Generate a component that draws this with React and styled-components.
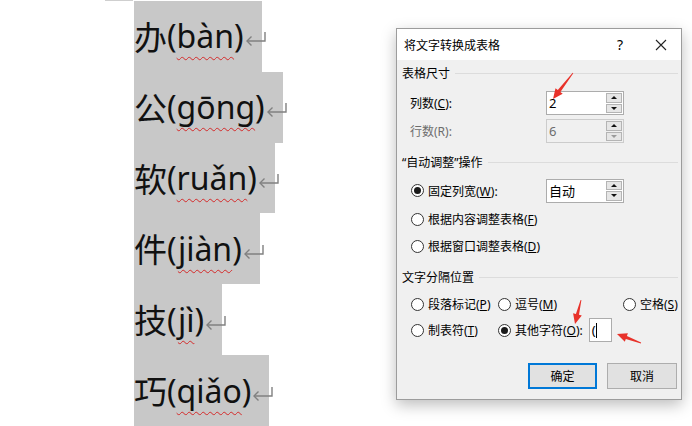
import React from "react";
import styled, { createGlobalStyle } from "styled-components";

const GlobalStyle = createGlobalStyle`
  html, body {
    margin: 0;
    padding: 0;
    background: #fff;
  }
  body {
    font-family: "Noto Sans", "Noto Sans CJK SC", sans-serif;
  }
`;

const Page = styled.div`
  position: relative;
  display: flex;
  width: 692px;
  height: 426px;
  overflow: hidden;
  background: #fff;
`;

/* ---------- word document side ---------- */

const DocPane = styled.div`
  flex: none;
  width: 396px;
  display: flex;
  flex-direction: column;
  align-items: flex-start;
`;
const TopStripe = styled.div`
  margin-left: 105px;
  width: 28px;
  height: 1px;
  background: #cfcfcf;
`;
const Para = styled.div`
  margin-left: 134px;
  height: 71.4px;
  display: flex;
  align-items: center;
  background: #c8c8c8;
  color: #111;
  line-height: 1;
`;
const Han = styled.span`
  font-family: "Noto Sans CJK SC", sans-serif;
  font-size: 33px;
`;
const Pinyin = styled.span`
  font-family: "Noto Sans", "Noto Sans CJK SC", sans-serif;
  font-size: 32px;
`;
const Wavy = styled.span`
  text-decoration-line: underline;
  text-decoration-style: wavy;
  text-decoration-color: #d42a2a;
  text-decoration-thickness: 1px;
  text-underline-offset: 8px;
`;
const Mark = styled.span`
  width: 18px;
  height: 14px;
  margin-top: 4px;
  display: inline-flex;
  svg {
    overflow: visible;
    flex: none;
  }
`;

const words = [
  { ch: "办", py: "bàn" },
  { ch: "公", py: "gōng" },
  { ch: "软", py: "ruǎn" },
  { ch: "件", py: "jiàn" },
  { ch: "技", py: "jì" },
  { ch: "巧", py: "qiǎo" },
];

function ParaMark() {
  return (
    <Mark>
      <svg width="22" height="14" viewBox="0 0 22 14">
        <path d="M21 1 V10 H3" fill="none" stroke="#808080" strokeWidth="1.4" />
        <path d="M7.5 5.5 L3 10 L7.5 14.5" fill="none" stroke="#808080" strokeWidth="1.4" />
      </svg>
    </Mark>
  );
}

/* ---------- dialog ---------- */

const DialogArea = styled.div`
  flex: none;
  padding-top: 28px;
`;
const Dialog = styled.div`
  width: 286px;
  height: 372px;
  box-sizing: border-box;
  border: 1px solid #9c9c9c;
  background: #f0f0f0;
  box-shadow: 0 5px 14px rgba(0, 0, 0, 0.26);
  display: flex;
  flex-direction: column;
  font-family: "Noto Sans", "Noto Sans CJK SC", sans-serif;
  font-size: 12px;
  color: #000;
`;
const TitleBar = styled.div`
  height: 31px;
  flex: none;
  display: flex;
  align-items: center;
  background: #fff;
  padding-left: 7px;
`;
const Title = styled.div`
  flex: 1;
`;
const TitleButton = styled.div`
  width: ${(p) => p.$w}px;
  height: 31px;
  display: flex;
  align-items: center;
  justify-content: center;
  font-size: 14px;
`;
const Body = styled.div`
  display: flex;
  flex-direction: column;
  padding: 0 3px 0 5px;
`;
const GroupHeader = styled.div`
  height: 18px;
  margin-top: ${(p) => p.$mt}px;
  display: flex;
  align-items: center;
  gap: 5px;
  &::after {
    content: "";
    flex: 1;
    height: 1px;
    background: #dcdcdc;
  }
`;
const FieldRow = styled.div`
  height: ${(p) => p.$h || 24}px;
  margin-top: ${(p) => p.$mt}px;
  padding-left: ${(p) => p.$pl || 8}px;
  display: flex;
  align-items: center;
`;
const FieldLabel = styled.div`
  width: ${(p) => p.$w || 136}px;
  color: ${(p) => (p.$disabled ? "#6d6d6d" : "#000")};
`;
const SpinBox = styled.div`
  width: 78px;
  height: 24px;
  box-sizing: border-box;
  display: flex;
  border: 1px solid ${(p) => (p.$disabled ? "#cccccc" : "#acacac")};
  background: ${(p) => (p.$disabled ? "#f0f0f0" : "#fff")};
`;
const SpinValue = styled.div`
  flex: 1;
  display: flex;
  align-items: center;
  padding-left: 2px;
  font-size: 13px;
  color: ${(p) => (p.$disabled ? "#6d6d6d" : "#000")};
`;
const SpinButtons = styled.div`
  width: 16px;
  display: flex;
  flex-direction: column;
  gap: 1px;
  padding: 1px 1px 1px 0;
`;
const SpinButton = styled.div`
  flex: 1;
  display: flex;
  align-items: center;
  justify-content: center;
  border: 1px solid #b4b4b4;
  background: #e6e6e6;
  &::before {
    content: "";
    border-left: 3px solid transparent;
    border-right: 3px solid transparent;
    ${(p) => (p.$down ? "border-top" : "border-bottom")}: 3px solid
      ${(p) => (p.$dim ? "#9a9a9a" : "#111")};
  }
`;
const RadioLine = styled.label`
  display: flex;
  align-items: center;
  gap: 4px;
  white-space: nowrap;
`;
const RadioDot = styled.span`
  width: 13px;
  height: 13px;
  box-sizing: border-box;
  border-radius: 50%;
  border: 1px solid #333;
  background: #fff;
  display: flex;
  align-items: center;
  justify-content: center;
  flex: none;
  &::after {
    content: "";
    width: 7px;
    height: 7px;
    border-radius: 50%;
    background: ${(p) => (p.$on ? "#1a1a1a" : "transparent")};
  }
`;
const SepGrid = styled.div`
  height: ${(p) => p.$h}px;
  margin-top: ${(p) => p.$mt}px;
  padding-left: 9px;
  display: grid;
  grid-template-columns: 87px 125px 1fr;
  align-items: center;
`;
const OtherCell = styled.div`
  display: flex;
  align-items: center;
  gap: 6px;
`;
const CharBox = styled.div`
  width: 23px;
  height: 24px;
  box-sizing: border-box;
  border: 1px solid #acacac;
  background: #fff;
  display: flex;
  align-items: center;
  padding-left: 2px;
  font-size: 13px;
  &::after {
    content: "";
    width: 1px;
    height: 15px;
    background: #000;
  }
`;
const ButtonRow = styled.div`
  margin-top: 21px;
  display: flex;
  justify-content: flex-end;
  gap: 10px;
  padding-right: 1px;
`;
const Button = styled.div`
  width: ${(p) => p.$w}px;
  height: 26px;
  box-sizing: border-box;
  display: flex;
  align-items: center;
  justify-content: center;
  background: #e1e1e1;
  border: ${(p) => (p.$primary ? "2px solid #0078d7" : "1px solid #adadad")};
`;

function Radio({ on, children }) {
  return (
    <RadioLine>
      <RadioDot $on={on} />
      <span>{children}</span>
    </RadioLine>
  );
}

/* ---------- red annotation arrows ---------- */

const Overlay = styled.svg`
  position: absolute;
  left: 0;
  top: 0;
  pointer-events: none;
`;

function arrowPoints([tx, ty], [px, py]) {
  const len = Math.hypot(px - tx, py - ty);
  const dx = (px - tx) / len;
  const dy = (py - ty) / len;
  const nx = -dy;
  const ny = dx;
  const head = 10;
  const bx = px - dx * head;
  const by = py - dy * head;
  const pts = [
    [tx + nx * 0.4, ty + ny * 0.4],
    [bx + nx * 1.6, by + ny * 1.6],
    [bx + nx * 4.5, by + ny * 4.5],
    [px, py],
    [bx - nx * 4.5, by - ny * 4.5],
    [bx - nx * 1.6, by - ny * 1.6],
    [tx - nx * 0.4, ty - ny * 0.4],
  ];
  return pts.map((p) => p.map((v) => v.toFixed(1)).join(",")).join(" ");
}

const arrows = [
  { from: [573, 73], to: [553, 99] },
  { from: [581, 300], to: [575, 324] },
  { from: [641, 343], to: [617, 334] },
];

export default function App() {
  return (
    <>
      <GlobalStyle />
      <Page>
        <DocPane>
          <TopStripe />
          {words.map((w) => (
            <Para key={w.ch}>
              <Han>{w.ch}</Han>
              <Pinyin>
                (<Wavy>{w.py}</Wavy>)
              </Pinyin>
              <ParaMark />
            </Para>
          ))}
        </DocPane>

        <DialogArea>
          <Dialog>
            <TitleBar>
              <Title>将文字转换成表格</Title>
              <TitleButton $w={40}>?</TitleButton>
              <TitleButton $w={41}>
                <svg width="12" height="12" viewBox="0 0 12 12">
                  <path d="M1 1 L11 11 M11 1 L1 11" stroke="#222" strokeWidth="1.1" />
                </svg>
              </TitleButton>
            </TitleBar>

            <Body>
              <GroupHeader $mt={4}>表格尺寸</GroupHeader>
              <FieldRow $mt={9}>
                <FieldLabel>
                  列数(<u>C</u>):
                </FieldLabel>
                <SpinBox>
                  <SpinValue>2</SpinValue>
                  <SpinButtons>
                    <SpinButton />
                    <SpinButton $down />
                  </SpinButtons>
                </SpinBox>
              </FieldRow>
              <FieldRow $mt={4}>
                <FieldLabel $disabled>行数(R):</FieldLabel>
                <SpinBox $disabled>
                  <SpinValue $disabled>6</SpinValue>
                  <SpinButtons>
                    <SpinButton />
                    <SpinButton $down $dim />
                  </SpinButtons>
                </SpinBox>
              </FieldRow>

              <GroupHeader $mt={10}>“自动调整”操作</GroupHeader>
              <FieldRow $mt={7} $h={25} $pl={9}>
                <FieldLabel $w={135}>
                  <Radio on>
                    固定列宽(<u>W</u>):
                  </Radio>
                </FieldLabel>
                <SpinBox>
                  <SpinValue>自动</SpinValue>
                  <SpinButtons>
                    <SpinButton />
                    <SpinButton $down />
                  </SpinButtons>
                </SpinBox>
              </FieldRow>
              <FieldRow $mt={5} $h={22} $pl={9}>
                <Radio>
                  根据内容调整表格(<u>F</u>)
                </Radio>
              </FieldRow>
              <FieldRow $mt={5} $h={22} $pl={9}>
                <Radio>
                  根据窗口调整表格(<u>D</u>)
                </Radio>
              </FieldRow>

              <GroupHeader $mt={11}>文字分隔位置</GroupHeader>
              <SepGrid $mt={7} $h={22}>
                <Radio>
                  段落标记(<u>P</u>)
                </Radio>
                <Radio>
                  逗号(<u>M</u>)
                </Radio>
                <Radio>
                  空格(<u>S</u>)
                </Radio>
              </SepGrid>
              <SepGrid $mt={3} $h={24}>
                <Radio>
                  制表符(<u>T</u>)
                </Radio>
                <OtherCell>
                  <Radio on>
                    其他字符(<u>O</u>):
                  </Radio>
                  <CharBox>(</CharBox>
                </OtherCell>
              </SepGrid>

              <ButtonRow>
                <Button $w={69} $primary>
                  确定
                </Button>
                <Button $w={70}>取消</Button>
              </ButtonRow>
            </Body>
          </Dialog>
        </DialogArea>

        <Overlay width="692" height="426" viewBox="0 0 692 426">
          {arrows.map((a, i) => (
            <polygon key={i} points={arrowPoints(a.from, a.to)} fill="#e8322a" />
          ))}
        </Overlay>
      </Page>
    </>
  );
}
